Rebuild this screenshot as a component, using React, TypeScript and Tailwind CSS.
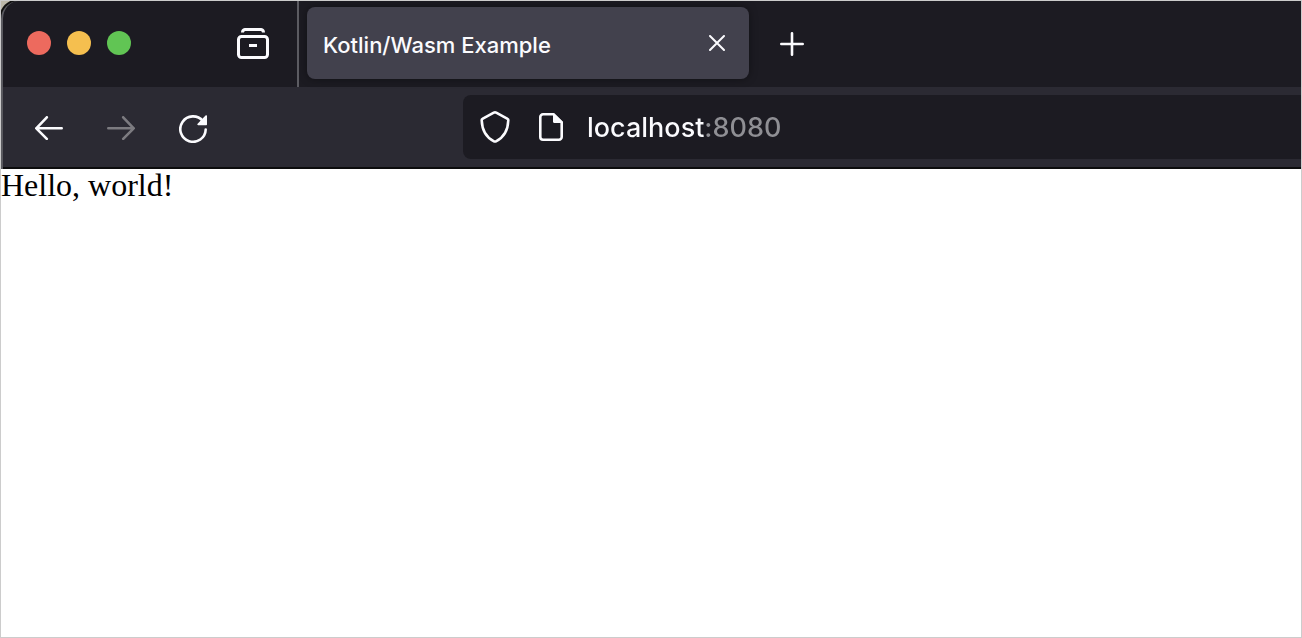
import { useState } from "react";

function AllTabsIcon() {
  return (
    <svg width="32" height="32" viewBox="0 0 32 32" fill="none" stroke="#fbfbfe" strokeWidth="3" aria-hidden="true">
      <path d="M5.5 4.500A3 3 0 0 1 8 1.500h16a3 3 0 0 1 2.500 3" />
      <rect x="1.5" y="8.5" width="29" height="21" rx="3" />
      <path d="M12 17.500h8" />
    </svg>
  );
}

function CloseIcon() {
  return (
    <svg width="16" height="16" viewBox="0 0 16 16" fill="none" stroke="#fbfbfe" strokeWidth="2" strokeLinecap="round" aria-hidden="true">
      <path d="M1 1l14 14M15 1L1 15" />
    </svg>
  );
}

function PlusIcon() {
  return (
    <svg width="24" height="26" viewBox="0 0 24 26" fill="none" stroke="#fbfbfe" strokeWidth="2.6" strokeLinecap="round" aria-hidden="true">
      <path d="M12 3.300v21.400M1.300 14h21.400" />
    </svg>
  );
}

function ArrowIcon({ forward = false }: { forward?: boolean }) {
  return (
    <svg
      width="28"
      height="24"
      viewBox="0 0 28 24"
      fill="none"
      stroke="currentColor"
      strokeWidth="2.6"
      strokeLinecap="round"
      strokeLinejoin="round"
      aria-hidden="true"
    >
      <path d={forward ? "M1.300 12.300h25.400M16.200 1.300l10.500 11-10.500 10.500" : "M26.700 12.300H1.300M11.800 1.300l-10.500 11 10.500 10.500"} />
    </svg>
  );
}

function ReloadIcon() {
  return (
    <svg width="28" height="28" viewBox="0 0 28 28" fill="none" aria-hidden="true">
      <path d="M26.700 14.500A12.700 12.700 0 1 1 23.800 6" stroke="#fbfbfe" strokeWidth="2.6" strokeLinecap="round" />
      <path d="M28 .9v8.500a.8.8 0 0 1-.8.8h-8a.8.8 0 0 1-.6-1.400L26.500.4A.9.9 0 0 1 28 .9z" fill="#fbfbfe" />
    </svg>
  );
}

function ShieldIcon() {
  return (
    <svg width="32" height="32" viewBox="0 0 32 32" fill="none" stroke="#fbfbfe" strokeWidth="2.6" strokeLinejoin="round" aria-hidden="true">
      <path d="M14.800 1.700a2.500 2.500 0 0 1 2.400 0L28.600 7.900a1.300 1.300 0 0 1 .7 1.300C29 18.200 25.500 26 17 30.300a2.200 2.200 0 0 1-2 0C6.500 26 3 18.200 2.700 9.200a1.300 1.300 0 0 1 .7-1.300z" />
    </svg>
  );
}

function PageIcon() {
  return (
    <svg width="32" height="32" viewBox="0 0 32 32" fill="none" aria-hidden="true">
      <path
        d="M18.500 3.300H8A2.700 2.700 0 0 0 5.300 6v20A2.700 2.700 0 0 0 8 28.700h16a2.700 2.700 0 0 0 2.700-2.700V11.500z"
        stroke="#fbfbfe"
        strokeWidth="2.6"
        strokeLinejoin="round"
      />
      <path d="M18 2.200h1.200l8.600 8.600V12h-8.300a1.500 1.500 0 0 1-1.500-1.500z" fill="#fbfbfe" />
    </svg>
  );
}

function TabStrip() {
  return (
    <div className="flex items-stretch">
      <div className="flex items-center border-r-2 border-[#5c5c62] pt-1.5 pr-7 pb-2 pl-6">
        <div className="flex gap-4">
          <button type="button" aria-label="Close window" className="size-6 rounded-full bg-[#ed6a5e]" />
          <button type="button" aria-label="Minimize window" className="size-6 rounded-full bg-[#f5bf4f]" />
          <button type="button" aria-label="Zoom window" className="size-6 rounded-full bg-[#61c554]" />
        </div>
        <button type="button" aria-label="List all tabs" className="ml-[106px] pt-0.5">
          <AllTabsIcon />
        </button>
      </div>
      <div className="flex items-center pt-1.5 pb-2 pl-2">
        <div className="flex h-[72px] w-[442px] items-center justify-between rounded-lg bg-[#42414d] pr-6 pl-4 shadow-[0_0_8px_rgba(0,0,0,0.4)]">
          <button type="button" className="pt-1 text-[22px] leading-8 font-medium text-[#fbfbfe]">
            Kotlin/Wasm Example
          </button>
          <button type="button" aria-label="Close tab">
            <CloseIcon />
          </button>
        </div>
        <button type="button" aria-label="New tab" className="ml-[31px]">
          <PlusIcon />
        </button>
      </div>
    </div>
  );
}

function Toolbar() {
  const [address, setAddress] = useState("localhost:8080");

  return (
    <div className="flex items-center border-b-2 border-[#0c0c0d] bg-[#2b2a33] py-2 pl-3.5">
      <nav aria-label="History" className="flex gap-2">
        <button type="button" aria-label="Back" className="flex h-16 w-16 items-center justify-center pt-0.5 text-[#fbfbfe]">
          <ArrowIcon />
        </button>
        <button type="button" aria-label="Forward" disabled className="flex h-16 w-16 items-center justify-center pt-0.5 text-[#7c7b80]">
          <ArrowIcon forward />
        </button>
        <button type="button" aria-label="Reload" className="flex h-16 w-16 items-center justify-center pt-1">
          <ReloadIcon />
        </button>
      </nav>
      <div className="ml-[238px] flex h-16 flex-1 items-center rounded-l-lg bg-[#1c1b22] pl-4">
        <button type="button" aria-label="Tracking protection" className="mr-6">
          <ShieldIcon />
        </button>
        <button type="button" aria-label="Site information" className="mr-5">
          <PageIcon />
        </button>
        <input
          type="text"
          aria-label="Address"
          value={address}
          onChange={(event) => setAddress(event.target.value)}
          className="h-10 min-w-0 flex-1 bg-[linear-gradient(to_right,#fbfbfe_119px,#8f8f94_119px)] bg-clip-text pt-0.5 text-[27px] font-medium text-transparent caret-white outline-none"
        />
      </div>
    </div>
  );
}

export default function App() {
  return (
    <div className="flex min-h-screen flex-col border border-[#cccccc] bg-white font-['Inter',sans-serif]">
      <header className="overflow-hidden bg-[#bdb9aa]">
        <div className="overflow-hidden rounded-tl-[18px] border-l-2 border-[#5a5a60] bg-[#1c1b22] shadow-[0_0_0_2px_#111111]">
          <TabStrip />
          <Toolbar />
        </div>
      </header>
      <main className="flex-1 font-['Liberation_Serif',serif] text-[32px] leading-8 text-black">
        <p>Hello, world!</p>
      </main>
    </div>
  );
}
